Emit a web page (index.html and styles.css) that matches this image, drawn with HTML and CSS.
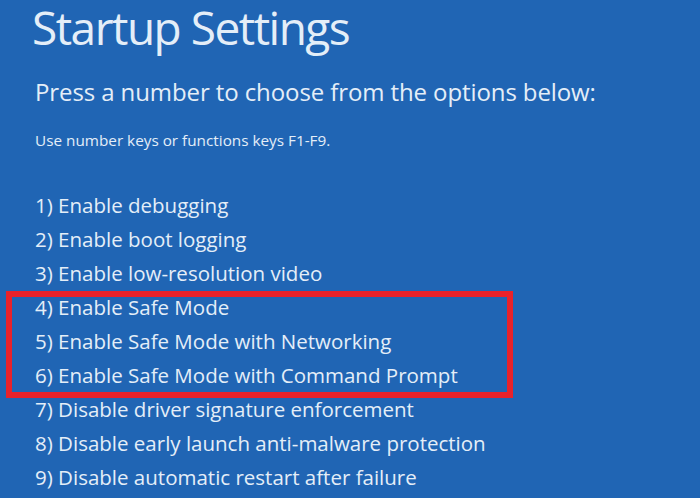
FILE: index.html
```html
<!DOCTYPE html>
<html lang="en">
<head>
  <meta charset="UTF-8">
  <meta name="viewport" content="width=device-width, initial-scale=1.0">
  <title>Startup Settings</title>
  <link rel="stylesheet" href="styles.css">
</head>

<body>
  <div class="screen">
    <h1>Startup Settings</h1>
    <p class="intro">Press a number to choose from the options below:</p>
    <p class="hint">Use number keys or functions keys F1-F9.</p>

    <ul class="options">
      <li>1) Enable debugging</li>
      <li>2) Enable boot logging</li>
      <li>3) Enable low-resolution video</li>
      <li class="highlight">
        <ul class="options">
          <li>4) Enable Safe Mode</li>
          <li>5) Enable Safe Mode with Networking</li>
          <li>6) Enable Safe Mode with Command Prompt</li>
        </ul>
      </li>
      <li>7) Disable driver signature enforcement</li>
      <li>8) Disable early launch anti-malware protection</li>
      <li>9) Disable automatic restart after failure</li>
    </ul>
  </div>
</body>
</html>
```

FILE: styles.css
```css
body {
  margin: 0;
  background-color: #2065b4;
  font-family: "Open Sans", "Noto Sans", sans-serif;
  color: #e4eef8;
  overflow: hidden;
}

.screen {
  padding: 0 0 0 35px;
  height: 498px;
}

h1 {
  margin: 0 0 0 -3px;
  font-size: 46px;
  font-weight: 400;
  line-height: 54px;
  letter-spacing: -1.5px;
}

.intro {
  margin: 23px 0 0;
  font-size: 24px;
  line-height: 30px;
  letter-spacing: -0.1px;
}

.hint {
  margin: 23px 0 0;
  font-size: 15.3px;
  line-height: 20px;
}

.options {
  list-style: none;
  margin: 38px 0 0;
  padding: 0;
}

.options li {
  font-size: 20.5px;
  line-height: 34px;
}

/* red frame drawn over items 4-6 */
.highlight {
  position: relative;
}

.highlight::before {
  content: "";
  position: absolute;
  top: 1px;
  bottom: -6px;
  left: -29px;
  width: 507px;
  border: 6px solid #e8222b;
  box-sizing: border-box;
}

.highlight .options {
  margin: 0;
}
```
